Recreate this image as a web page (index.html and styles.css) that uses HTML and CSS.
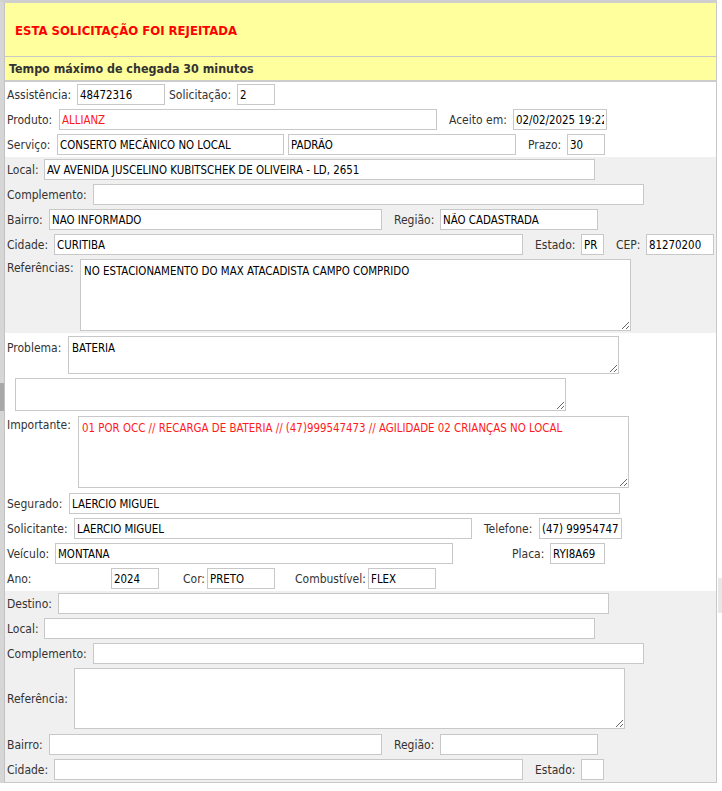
FILE: index.html
```html
<!DOCTYPE html>
<html lang="pt-BR">
<head>
<meta charset="utf-8">
<title>Solicitação</title>
<link rel="stylesheet" href="styles.css">
</head>
<body>
<div class="frame">
  <div class="panel">
    <div class="alert">ESTA SOLICITAÇÃO FOI REJEITADA</div>
    <div class="notice">Tempo máximo de chegada 30 minutos</div>

    <section class="sec white s1">
      <div class="row">
        <label class="lab lw70">Assistência:</label><input class="inp w88" value="48472316">
        <label class="lab lw68 ml4">Solicitação:</label><input class="inp w38" value="2">
      </div>
      <div class="row">
        <label class="lab lw52">Produto:</label><input class="inp w378 red" value="ALLIANZ">
        <label class="lab lw64 ml12">Aceito em:</label><input class="inp w94" value="02/02/2025 19:22">
      </div>
      <div class="row">
        <label class="lab lw50">Serviço:</label><input class="inp w227" value="CONSERTO MECÂNICO NO LOCAL">
        <input class="inp w228 ml4" value="PADRÃO">
        <label class="lab lw39 ml12">Prazo:</label><input class="inp w38" value="30">
      </div>
    </section>

    <section class="sec gray s2">
      <div class="row">
        <label class="lab lw37">Local:</label><input class="inp w551" value="AV AVENIDA JUSCELINO KUBITSCHEK DE OLIVEIRA - LD, 2651">
      </div>
      <div class="row">
        <label class="lab lw86">Complemento:</label><input class="inp w551" value="">
      </div>
      <div class="row">
        <label class="lab lw42">Bairro:</label><input class="inp w333" value="NAO INFORMADO">
        <label class="lab lw46 ml12">Região:</label><input class="inp w158" value="NÃO CADASTRADA">
      </div>
      <div class="row">
        <label class="lab lw47">Cidade:</label><input class="inp w469" value="CURITIBA">
        <label class="lab lw46 ml12">Estado:</label><input class="inp w23" value="PR">
        <label class="lab lw30 ml12">CEP:</label><input class="inp w68" value="81270200">
      </div>
      <div class="row top">
        <label class="lab lw73 pt2">Referências:</label><textarea class="ta w551 h72">NO ESTACIONAMENTO DO MAX ATACADISTA CAMPO COMPRIDO</textarea>
      </div>
    </section>

    <section class="sec white s3">
      <div class="row top">
        <label class="lab lw61 pt5">Problema:</label><textarea class="ta w551 h38">BATERIA</textarea>
      </div>
      <div class="row indent">
        <textarea class="ta w551 h33"></textarea>
      </div>
      <div class="row top mt5">
        <label class="lab lw71 pt2">Importante:</label><textarea class="ta w551 h72 red">01 POR OCC // RECARGA DE BATERIA // (47)999547473 // AGILIDADE 02 CRIANÇAS NO LOCAL</textarea>
      </div>
      <div class="row mt5">
        <label class="lab lw62">Segurado:</label><input class="inp w551" value="LAERCIO MIGUEL">
      </div>
      <div class="row">
        <label class="lab lw67">Solicitante:</label><input class="inp w398" value="LAERCIO MIGUEL">
        <label class="lab lw55 ml12">Telefone:</label><input class="inp w83" value="(47) 999547473">
      </div>
      <div class="row">
        <label class="lab lw48">Veículo:</label><input class="inp w398" value="MONTANA">
        <label class="lab lw38 ml59">Placa:</label><input class="inp w55" value="RYI8A69">
      </div>
      <div class="row">
        <label class="lab lw104">Ano:</label><input class="inp w48" value="2024">
        <label class="lab lw24 ml24">Cor:</label><input class="inp w68" value="PRETO">
        <label class="lab lw73 ml20">Combustível:</label><input class="inp w68" value="FLEX">
      </div>
    </section>

    <section class="sec gray s4">
      <div class="row">
        <label class="lab lw51">Destino:</label><input class="inp w551" value="">
      </div>
      <div class="row">
        <label class="lab lw37">Local:</label><input class="inp w551" value="">
      </div>
      <div class="row">
        <label class="lab lw86">Complemento:</label><input class="inp w551" value="">
      </div>
      <div class="row">
        <label class="lab lw67">Referência:</label><textarea class="ta w551 h61"></textarea>
      </div>
      <div class="row mt5">
        <label class="lab lw42">Bairro:</label><input class="inp w333" value="">
        <label class="lab lw46 ml12">Região:</label><input class="inp w158" value="">
      </div>
      <div class="row">
        <label class="lab lw47">Cidade:</label><input class="inp w469" value="">
        <label class="lab lw46 ml12">Estado:</label><input class="inp w23" value="">
      </div>
    </section>
  </div>
  <div class="scroll-thumb"></div>
  <div class="side-block"></div>
</div>
</body>
</html>
```

FILE: styles.css
```css
html, body {
  margin: 0;
  padding: 0;
  background: #ffffff;
}

body {
  font-family: "DejaVu Sans Condensed", "DejaVu Sans", sans-serif;
  font-stretch: condensed;
  font-size: 12px;
  color: #333333;
  height: 791px;
  overflow: hidden;
}

.frame {
  position: relative;
  width: 713px;
  border-top: 3px solid #cfcfcf;
  border-left: 4px solid #d6d6d6;
}

.panel {
  border-left: 1px solid #c2c2c2;
  border-right: 1px solid #c8c8c8;
  border-bottom: 1px solid #c8c8c8;
}

.alert {
  height: 54px;
  background: #ffff9e;
  border-bottom: 1px solid #c8c8c8;
  display: flex;
  align-items: center;
  padding-left: 10px;
  padding-top: 1px;
  box-sizing: border-box;
  color: #ff0000;
  font-weight: bold;
  font-size: 13px;
}

.notice {
  height: 23px;
  background: #ffff9e;
  border-bottom: 2px solid #cccccc;
  display: flex;
  align-items: center;
  padding-left: 4px;
  color: #333333;
  font-weight: bold;
  font-size: 12.4px;
}

.sec {
  display: flex;
  flex-direction: column;
  gap: 4px;
  padding: 2px 0 2px 2px;
}

.white { background: #ffffff; }
.gray { background: #f0f0f0; }

.s1 { height: 75px; box-sizing: border-box; }
.s3 { padding-top: 3px; padding-bottom: 2px; }

.row {
  display: flex;
  align-items: center;
}

.row.top { align-items: flex-start; }
.row.indent { padding-left: 8px; }
.mt5 { margin-top: 1px; }

.lab {
  flex: none;
  white-space: nowrap;
  color: #333333;
  font-size: 12px;
  line-height: 14px;
}

.pt2 { padding-top: 2px; }
.pt5 { padding-top: 5px; }

.inp, .ta {
  flex: none;
  box-sizing: border-box;
  margin: 0;
  border: 1px solid #c8c8c8;
  background: #ffffff;
  color: #000000;
  font-family: "DejaVu Sans Condensed", "DejaVu Sans", sans-serif;
  font-stretch: condensed;
  font-size: 11.4px;
  outline: none;
}

.inp {
  height: 21px;
  padding: 0 2px;
}

.ta {
  padding: 4px 3px;
  resize: both;
  overflow: hidden;
  line-height: 14px;
}

.red { color: #ff1a1a; }

.ml4 { margin-left: 4px; }
.ml12 { margin-left: 12px; }
.ml20 { margin-left: 20px; }
.ml24 { margin-left: 24px; }
.ml59 { margin-left: 59px; }

.lw24 { width: 24px; }
.lw30 { width: 30px; }
.lw37 { width: 37px; }
.lw38 { width: 38px; }
.lw39 { width: 39px; }
.lw42 { width: 42px; }
.lw46 { width: 46px; }
.lw47 { width: 47px; }
.lw48 { width: 48px; }
.lw50 { width: 50px; }
.lw51 { width: 51px; }
.lw52 { width: 52px; }
.lw55 { width: 55px; }
.lw61 { width: 61px; }
.lw62 { width: 62px; }
.lw64 { width: 64px; }
.lw67 { width: 67px; }
.lw68 { width: 68px; }
.lw70 { width: 70px; }
.lw71 { width: 71px; }
.lw73 { width: 73px; }
.lw86 { width: 86px; }
.lw104 { width: 104px; }

.w23 { width: 23px; }
.w38 { width: 38px; }
.w48 { width: 48px; }
.w55 { width: 55px; }
.w68 { width: 68px; }
.w83 { width: 83px; }
.w88 { width: 88px; }
.w94 { width: 94px; }
.w158 { width: 158px; }
.w227 { width: 227px; }
.w228 { width: 228px; }
.w333 { width: 333px; }
.w378 { width: 378px; }
.w398 { width: 398px; }
.w469 { width: 469px; }
.w551 { width: 551px; }

.h33 { height: 33px; }
.h38 { height: 38px; }
.h61 { height: 61px; }
.h72 { height: 72px; }

.scroll-thumb {
  position: absolute;
  left: -4px;
  top: 380px;
  width: 4px;
  height: 28px;
  background: #a8a8a8;
}

.side-block {
  position: absolute;
  left: 714px;
  top: 575px;
  width: 8px;
  height: 35px;
  background: #e8e8e8;
}
```
